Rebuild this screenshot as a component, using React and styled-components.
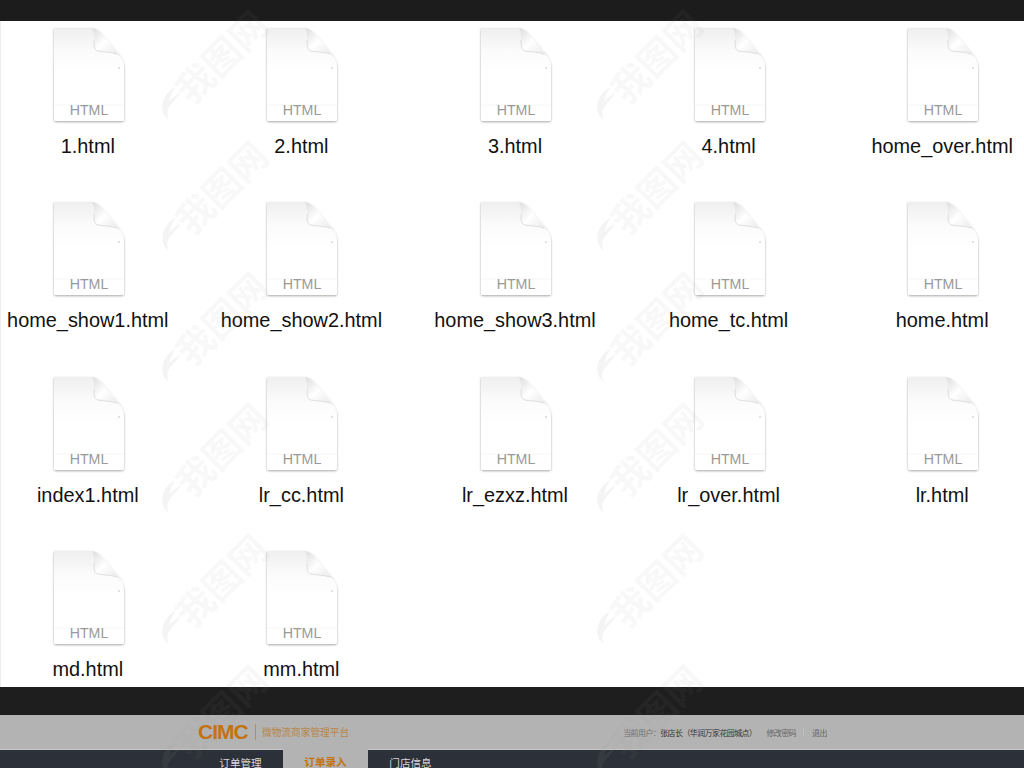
import React from "react";
import styled, { createGlobalStyle } from "styled-components";

const files = [
  "1.html", "2.html", "3.html", "4.html", "home_over.html",
  "home_show1.html", "home_show2.html", "home_show3.html", "home_tc.html", "home.html",
  "index1.html", "lr_cc.html", "lr_ezxz.html", "lr_over.html", "lr.html",
  "md.html", "mm.html"
];

const GlobalStyle = createGlobalStyle`
  html, body {
    margin: 0;
    padding: 0;
    background: #fff;
  }
`;

const Page = styled.div`
  position: relative;
  width: 1024px;
  height: 768px;
  overflow: hidden;
  display: flex;
  flex-direction: column;
  font-family: "Liberation Sans", "Noto Sans CJK SC", sans-serif;
`;

const TopBar = styled.div`
  height: 21px;
  flex: none;
  background: #1c1c1c;
`;

const FileArea = styled.div`
  height: 666px;
  flex: none;
  box-sizing: border-box;
  border-left: 1px solid #eeeeee;
  background: #fff;
  overflow: hidden;
`;

const FileGrid = styled.div`
  margin: 6px 0 0 -19px;
  display: grid;
  grid-template-columns: repeat(5, 213.6px);
  grid-auto-rows: 174.4px;
`;

const FileItem = styled.div`
  display: flex;
  flex-direction: column;
  align-items: center;
`;

const FileName = styled.div`
  margin: 6px 2px 0 0;
  font-size: 19.9px;
  line-height: 26px;
  color: #111;
  white-space: nowrap;
`;

const IconSvg = styled.svg`
  display: block;
  width: 76px;
  height: 100px;
`;

const IconLabel = styled.text`
  font-family: "Liberation Sans", sans-serif;
  font-size: 14.2px;
  fill: #9a9a9a;
`;

const DarkBand = styled.div`
  height: 28px;
  flex: none;
  background: #1e1e1e;
`;

const Header = styled.div`
  height: 34px;
  flex: none;
  background: #b3b3b3;
  border-bottom: 1px solid #c6c6c6;
  display: flex;
  align-items: center;
  padding-left: 198px;
`;

const Logo = styled.div`
  width: 50px;
  font-size: 21px;
  font-weight: 700;
  letter-spacing: -1px;
  line-height: 20px;
  color: #c4720f;
`;

const LogoRule = styled.div`
  width: 1px;
  height: 16px;
  margin: 0 6px 0 7px;
  background: #c08a48;
`;

const Slogan = styled.div`
  font-size: 9.7px;
  color: #b78546;
  white-space: nowrap;
`;

const UserInfo = styled.div`
  margin-left: 274px;
  display: flex;
  align-items: center;
  font-size: 8px;
  letter-spacing: -0.6px;
  color: #707070;
  white-space: nowrap;
`;

const UserName = styled.span`
  color: #333;
`;

const UserLink = styled.span`
  margin-left: ${({ $gap }) => $gap}px;
  color: #666;
`;

const UserDivider = styled.span`
  width: 1px;
  height: 9px;
  margin-left: 7px;
  background: #bdbdbd;
`;

const Nav = styled.div`
  flex: 1;
  background: #2c3038;
  display: flex;
  padding-left: 198px;
`;

const NavItem = styled.div`
  width: 85px;
  box-sizing: border-box;
  padding-top: 6px;
  margin-top: ${({ $active }) => ($active ? "-1px" : "0")};
  text-align: center;
  font-size: 10.6px;
  line-height: 14px;
  color: ${({ $active }) => ($active ? "#c4720f" : "#d8d8d8")};
  background: ${({ $active }) => ($active ? "#b3b3b3" : "transparent")};
  font-weight: ${({ $active }) => ($active ? 700 : 400)};
`;

const WatermarkLayer = styled.div`
  position: absolute;
  inset: 0;
  pointer-events: none;
  display: grid;
  grid-template-columns: 435px 435px;
  grid-auto-rows: 131px;
  padding: 9px 0 0 160px;
`;

const Watermark = styled.div`
  position: relative;
  width: 100px;
  height: 112px;
`;

const WatermarkText = styled.span`
  position: absolute;
  left: 5px;
  top: 28px;
  font-family: "Noto Sans CJK SC", sans-serif;
  font-size: 37px;
  font-weight: 700;
  line-height: 1;
  white-space: nowrap;
  color: rgba(150, 150, 150, 0.08);
  transform: rotate(-45deg);
`;

const Flame = styled.svg`
  position: absolute;
  left: 0;
  top: 76px;
  width: 22px;
  height: 36px;
`;

const FileIcon = () => (
  <IconSvg viewBox="0 0 76 100">
    <defs>
      <linearGradient id="paper" x1="0" y1="0" x2="0" y2="1">
        <stop offset="0" stopColor="#efefef" />
        <stop offset="0.25" stopColor="#fbfbfb" />
        <stop offset="0.5" stopColor="#ffffff" />
      </linearGradient>
      <linearGradient id="flap" x1="0" y1="0" x2="1" y2="1">
        <stop offset="0" stopColor="#dcdcdc" />
        <stop offset="0.45" stopColor="#ffffff" />
        <stop offset="1" stopColor="#e6e6e6" />
      </linearGradient>
      <filter id="shade" x="-10%" y="-10%" width="120%" height="120%">
        <feDropShadow dx="0" dy="1" stdDeviation="0.9" floodColor="#000" floodOpacity="0.35" />
      </filter>
    </defs>
    <path
      d="M3 1 H38 C44 1 47 3 50 6 L67 26 C71 31 73 35 73 41 V92 C73 93 72 94 71 94 H5 C4 94 3 93 3 92 Z"
      fill="url(#paper)"
      filter="url(#shade)"
    />
    <path
      d="M41 1 C46 2 48 4 50 6 L67 26 C69 28 70 29 70 30 C64 24 53 25 47 24 C43 23 43 19 43 13 C43 8 43 4 41 1 Z"
      fill="url(#flap)"
    />
    <path d="M43 13 C43 19 43 23 47 24 C53 25 60 25 66 27" fill="none" stroke="#dedede" strokeWidth="1" />
    <circle cx="68" cy="41" r="0.7" fill="#9db4cc" />
    <line x1="3" y1="78" x2="73" y2="78" stroke="#f6f6f6" />
    <IconLabel x="38" y="88" textAnchor="middle">HTML</IconLabel>
  </IconSvg>
);

const WatermarkMark = () => (
  <Watermark>
    <Flame viewBox="0 0 28 44">
      <path
        d="M20 1 C8 8 2 18 3 30 C4 36 7 41 11 43 C8 36 9 30 14 24 C18 19 23 15 26 8 C21 12 15 15 12 20 C13 13 16 7 20 1 Z"
        fill="rgba(150, 150, 150, 0.1)"
      />
    </Flame>
    <WatermarkText>我图网</WatermarkText>
  </Watermark>
);

export default function App() {
  return (
    <>
      <GlobalStyle />
      <Page>
        <TopBar />
        <FileArea>
          <FileGrid>
            {files.map((name) => (
              <FileItem key={name}>
                <FileIcon />
                <FileName>{name}</FileName>
              </FileItem>
            ))}
          </FileGrid>
        </FileArea>
        <DarkBand />
        <Header>
          <Logo>CIMC</Logo>
          <LogoRule />
          <Slogan>微物流商家管理平台</Slogan>
          <UserInfo>
            当前用户：<UserName>张店长（华润万家花园城点）</UserName>
            <UserLink $gap={10}>修改密码</UserLink>
            <UserDivider />
            <UserLink $gap={8}>退出</UserLink>
          </UserInfo>
        </Header>
        <Nav>
          <NavItem>订单管理</NavItem>
          <NavItem $active>订单录入</NavItem>
          <NavItem>门店信息</NavItem>
        </Nav>
        <WatermarkLayer>
          {Array.from({ length: 12 }, (_, i) => (
            <WatermarkMark key={i} />
          ))}
        </WatermarkLayer>
      </Page>
    </>
  );
}
